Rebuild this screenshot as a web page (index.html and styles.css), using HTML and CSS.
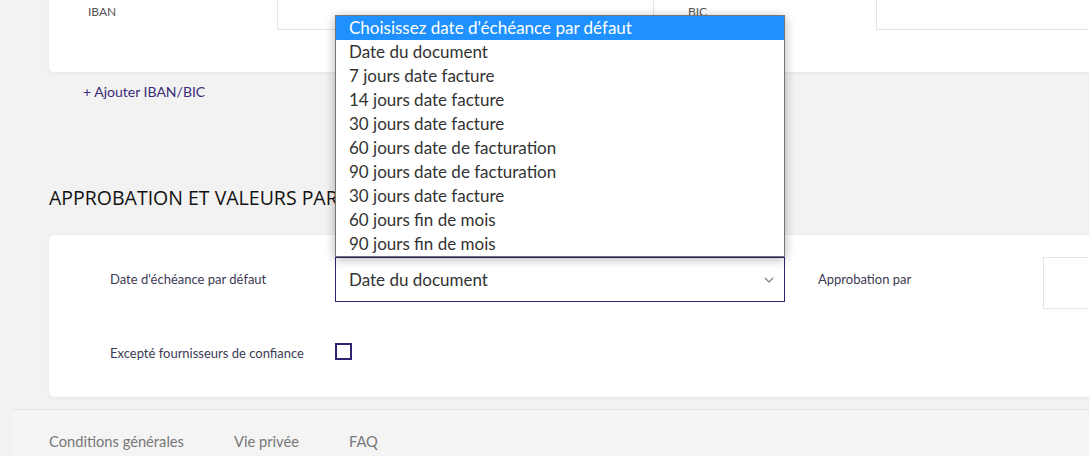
FILE: index.html
```html
<!DOCTYPE html>
<html lang="fr">
<head>
  <meta charset="UTF-8" />
  <meta name="viewport" content="width=device-width, initial-scale=1.0"/>
  <title>Paramètres</title>
  <link rel="stylesheet" href="styles.css">
</head>
<body>
  <div class="card card-bank">
    <div class="bank-row">
      <span class="bank-label">IBAN</span>
      <span class="bank-input iban"></span>
      <span class="bank-label bic-label">BIC</span>
      <span class="bank-input bic"></span>
    </div>
  </div>
  <a class="add-link" href="#">+ Ajouter IBAN/BIC</a>

  <h2 class="section-title">APPROBATION ET VALEURS PAR DÉFAUT</h2>

  <div class="card card-defaults">
    <div class="row">
      <span class="label">Date d'échéance par défaut</span>
      <div class="select-wrap">
        <div class="select">
          <span>Date du document</span>
          <svg class="chevron" width="10" height="6" viewBox="0 0 10 6"><path d="M1 1l4 4 4-4" fill="none" stroke="#888" stroke-width="1.4"/></svg>
        </div>
        <ul class="dropdown">
          <li class="selected">Choisissez date d'échéance par défaut</li>
          <li>Date du document</li>
          <li>7 jours date facture</li>
          <li>14 jours date facture</li>
          <li>30 jours date facture</li>
          <li>60 jours date de facturation</li>
          <li>90 jours date de facturation</li>
          <li>30 jours date facture</li>
          <li>60 jours fin de mois</li>
          <li>90 jours fin de mois</li>
        </ul>
      </div>
      <span class="label label-approval">Approbation par</span>
      <span class="approval-input"></span>
    </div>
    <div class="row row-check">
      <span class="label">Excepté fournisseurs de confiance</span>
      <span class="checkbox"></span>
    </div>
  </div>

  <footer class="footer">
    <a href="#">Conditions générales</a>
    <a href="#">Vie privée</a>
    <a href="#">FAQ</a>
  </footer>
</body>
</html>
```

FILE: styles.css
```css
html, body {
  margin: 0;
  padding: 0;
  overflow: hidden;
}

body {
  font-family: Lato, "Noto Sans", sans-serif;
  background-color: #f2f2f2;
  color: #333;
  width: 1089px;
  height: 456px;
}

.card {
  background-color: #fff;
  border-radius: 5px;
  box-shadow: 0 1px 4px rgba(0, 0, 0, 0.06);
  margin-left: 49px;
  width: 1060px;
}

.card-bank {
  margin-top: -20px;
  height: 92px;
  border-radius: 0 0 0 5px;
}

.bank-row {
  display: flex;
  align-items: flex-start;
}

.bank-label {
  font-size: 12px;
  color: #555;
  padding-left: 39px;
  width: 189px;
  margin-top: 24px;
}

.bank-input {
  height: 49px;
  border: 1px solid #e4e4e4;
  border-top: none;
}

.iban {
  width: 375px;
}

.bic-label {
  padding-left: 34px;
  width: 188px;
}

.bic {
  flex: 1;
  border-right: none;
}

.add-link {
  display: inline-block;
  margin: 11px 0 0 83px;
  font-size: 14px;
  color: #3a2a78;
  text-decoration: none;
}

.section-title {
  font-family: "Open Sans", sans-serif;
  font-weight: 400;
  font-size: 19.5px;
  color: #111;
  margin: 85px 0 0 49px;
  line-height: 26px;
  width: 286px;
  white-space: nowrap;
  overflow: hidden;
}

.card-defaults {
  margin-top: 24px;
  height: 162px;
  padding-top: 22px;
  box-sizing: border-box;
}

.row {
  display: flex;
  align-items: flex-start;
}

.label {
  font-size: 13px;
  color: #3d3a52;
  padding-left: 61px;
  width: 225px;
  line-height: 45px;
}

.select-wrap {
  position: relative;
}

.select {
  height: 45px;
  border: 1px solid #2d2573;
  display: flex;
  align-items: center;
  justify-content: space-between;
  padding: 0 10px 0 13px;
  box-sizing: border-box;
  width: 450px;
  font-size: 17px;
  color: #333;
}

.chevron {
  margin-top: 1px;
}

.dropdown {
  position: absolute;
  left: 0;
  bottom: 100%;
  width: 450px;
  box-sizing: border-box;
  margin: 0;
  padding: 0;
  list-style: none;
  background-color: #fff;
  border: 1px solid #767676;
  box-shadow: 0 2px 10px rgba(0, 0, 0, 0.3);
}

.dropdown li {
  height: 24px;
  line-height: 24px;
  padding-left: 13px;
  font-size: 17px;
  color: #333;
  white-space: nowrap;
}

.dropdown li.selected {
  background-color: #1e90ff;
  color: #fff;
}

.label-approval {
  padding-left: 33px;
  width: 225px;
}

.approval-input {
  flex: 1;
  height: 50px;
  border: 1px solid #e4e4e4;
  border-right: none;
}

.row-check {
  margin-top: 34px;
}

.row-check .label {
  line-height: 17px;
  margin-top: 2px;
}

.checkbox {
  width: 13px;
  height: 13px;
  border: 2px solid #2d2573;
}

.footer {
  margin: 12px 0 0 12px;
  border-top: 1px solid #e4e4e4;
  background-color: #f4f4f4;
  height: 60px;
  padding: 22px 0 0 37px;
  display: flex;
  gap: 50px;
}

.footer a {
  font-size: 14.7px;
  color: #777;
  text-decoration: none;
}
```
